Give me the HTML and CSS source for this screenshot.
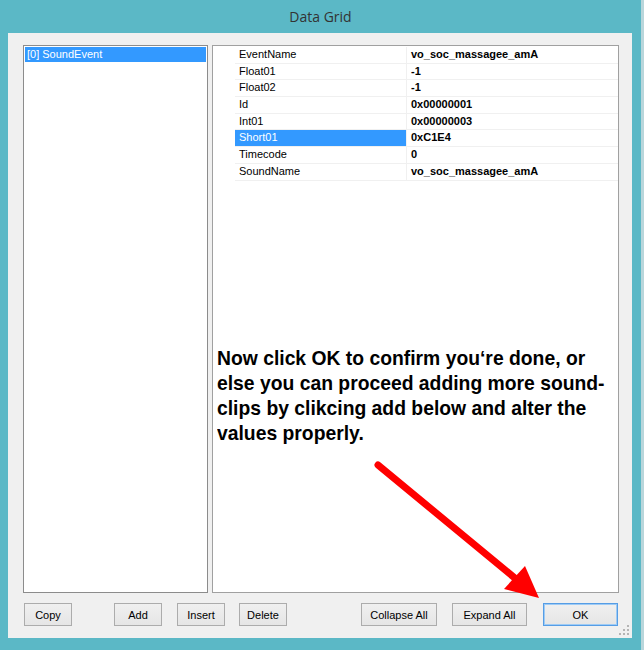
FILE: index.html
```html
<!DOCTYPE html>
<html lang="en">
<head>
  <meta charset="UTF-8" />
  <title>Data Grid</title>
  <link rel="stylesheet" href="styles.css">
</head>
<body>

  <div class="window">
    <div class="titlebar">Data Grid</div>

    <div class="client">
      <div class="panes">
        <div class="listbox">
          <div class="list-item selected">[0] SoundEvent</div>
        </div>

        <div class="propgrid">
          <div class="rows">
            <div class="row"><span class="gutter"></span><span class="name">EventName</span><span class="value">vo_soc_massagee_amA</span></div>
            <div class="row"><span class="gutter"></span><span class="name">Float01</span><span class="value">-1</span></div>
            <div class="row"><span class="gutter"></span><span class="name">Float02</span><span class="value">-1</span></div>
            <div class="row"><span class="gutter"></span><span class="name">Id</span><span class="value">0x00000001</span></div>
            <div class="row"><span class="gutter"></span><span class="name">Int01</span><span class="value">0x00000003</span></div>
            <div class="row"><span class="gutter"></span><span class="name selected">Short01</span><span class="value">0xC1E4</span></div>
            <div class="row"><span class="gutter"></span><span class="name">Timecode</span><span class="value">0</span></div>
            <div class="row"><span class="gutter"></span><span class="name">SoundName</span><span class="value">vo_soc_massagee_amA</span></div>
          </div>

          <p class="note">Now click OK to confirm you‘re done, or<br>else you can proceed adding more sound-<br>clips by clikcing add below and alter the<br>values properly.</p>
        </div>
      </div>

      <div class="buttons">
        <button class="btn btn-copy">Copy</button>
        <button class="btn btn-add">Add</button>
        <button class="btn btn-insert">Insert</button>
        <button class="btn btn-delete">Delete</button>

        <div class="right-group">
          <button class="btn btn-wide">Collapse All</button>
          <button class="btn btn-wide btn-expand">Expand All</button>
          <button class="btn btn-wide btn-ok">OK</button>
        </div>
      </div>

      <!-- size grip in the corner -->
      <svg class="grip" width="10" height="10" viewBox="0 0 10 10">
        <rect x="8" y="0" width="2" height="2" fill="#b4b4b4"/>
        <rect x="4" y="4" width="2" height="2" fill="#b4b4b4"/>
        <rect x="8" y="4" width="2" height="2" fill="#b4b4b4"/>
        <rect x="0" y="8" width="2" height="2" fill="#b4b4b4"/>
        <rect x="4" y="8" width="2" height="2" fill="#b4b4b4"/>
        <rect x="8" y="8" width="2" height="2" fill="#b4b4b4"/>
      </svg>
    </div>

    <!-- red pointer towards the OK button -->
    <svg class="arrow" width="644" height="650" viewBox="0 0 644 650">
      <line x1="378" y1="465" x2="516" y2="579" stroke="#ff0000" stroke-width="7" stroke-linecap="round"/>
      <polygon points="504,589 525,566 539,598" fill="#ff0000"/>
    </svg>
  </div>

</body>
</html>
```

FILE: styles.css
```css
* {
  margin: 0;
  padding: 0;
  box-sizing: border-box;
}

body {
  width: 644px;
  height: 650px;
  overflow: hidden;
  background-color: #b9d6db;
  font-family: 'Liberation Sans', Arial, sans-serif;
  font-size: 11px;
  color: #000;
}

.window {
  position: relative;
  width: 641px;
  height: 650px;
  background-color: #5bb8c6;
}

.titlebar {
  height: 33px;
  line-height: 33px;
  text-align: center;
  font-family: 'Open Sans', sans-serif;
  font-size: 14px;
  color: #333;
}

.client {
  position: relative;
  margin-left: 8px;
  width: 624px;
  height: 605px;
  padding: 12px 13px 0 15px;
  background-color: #f0f0f0;
}

.panes {
  display: flex;
  gap: 4px;
  height: 548px;
}

.listbox {
  flex: 0 0 185px;
  padding: 1px;
  background-color: #fff;
  border: 1px solid #8c8c8c;
}

.list-item {
  height: 15px;
  line-height: 15px;
  padding-left: 2px;
}

.list-item.selected {
  background-color: #3399ff;
  color: #fff;
}

.propgrid {
  flex: 1;
  min-width: 0;
  overflow: hidden;
  padding-top: 1px;
  background-color: #fff;
  border: 1px solid #a0a0a0;
}

.row {
  display: grid;
  grid-template-columns: 22px 172px 1fr;
  height: 16.7px;
  line-height: 15.7px;
}

.row .name,
.row .value {
  border-bottom: 1px solid #f0f0f0;
  padding-left: 4px;
  white-space: nowrap;
}

.row .name {
  border-right: 1px solid #f0f0f0;
}

.row .name.selected {
  background-color: #3399ff;
  color: #fff;
}

.row .value {
  font-weight: bold;
}

/* condensed bold caption, squeezed horizontally */
.note {
  margin-top: 164px;
  margin-left: 4px;
  white-space: nowrap;
  font-weight: bold;
  font-size: 21px;
  line-height: 25px;
  color: #000;
  transform: scaleX(0.92);
  transform-origin: left top;
}

.buttons {
  display: flex;
  margin-top: 10px;
  height: 23px;
}

.btn {
  width: 48px;
  height: 23px;
  font-family: 'Liberation Sans', Arial, sans-serif;
  font-size: 11px;
  color: #000;
  background: linear-gradient(#f0f0f0, #e5e5e5);
  border: 1px solid #acacac;
}

.btn-copy { margin-left: 1px; }
.btn-add { margin-left: 42px; }
.btn-insert { margin-left: 15px; }
.btn-delete { margin-left: 14px; }

.right-group {
  display: flex;
  margin-left: auto;
  margin-right: 1px;
}

.btn-wide {
  width: 76px;
}

.btn-expand {
  width: 75px;
  margin-left: 15px;
}

.btn-ok {
  width: 75px;
  margin-left: 16px;
  border: 1px solid #569de5;
  box-shadow: inset 0 0 0 1px #9ecbf5;
}

.grip {
  position: absolute;
  right: 3px;
  bottom: 3px;
}

.arrow {
  position: absolute;
  top: 0;
  left: 0;
  pointer-events: none;
}
```
